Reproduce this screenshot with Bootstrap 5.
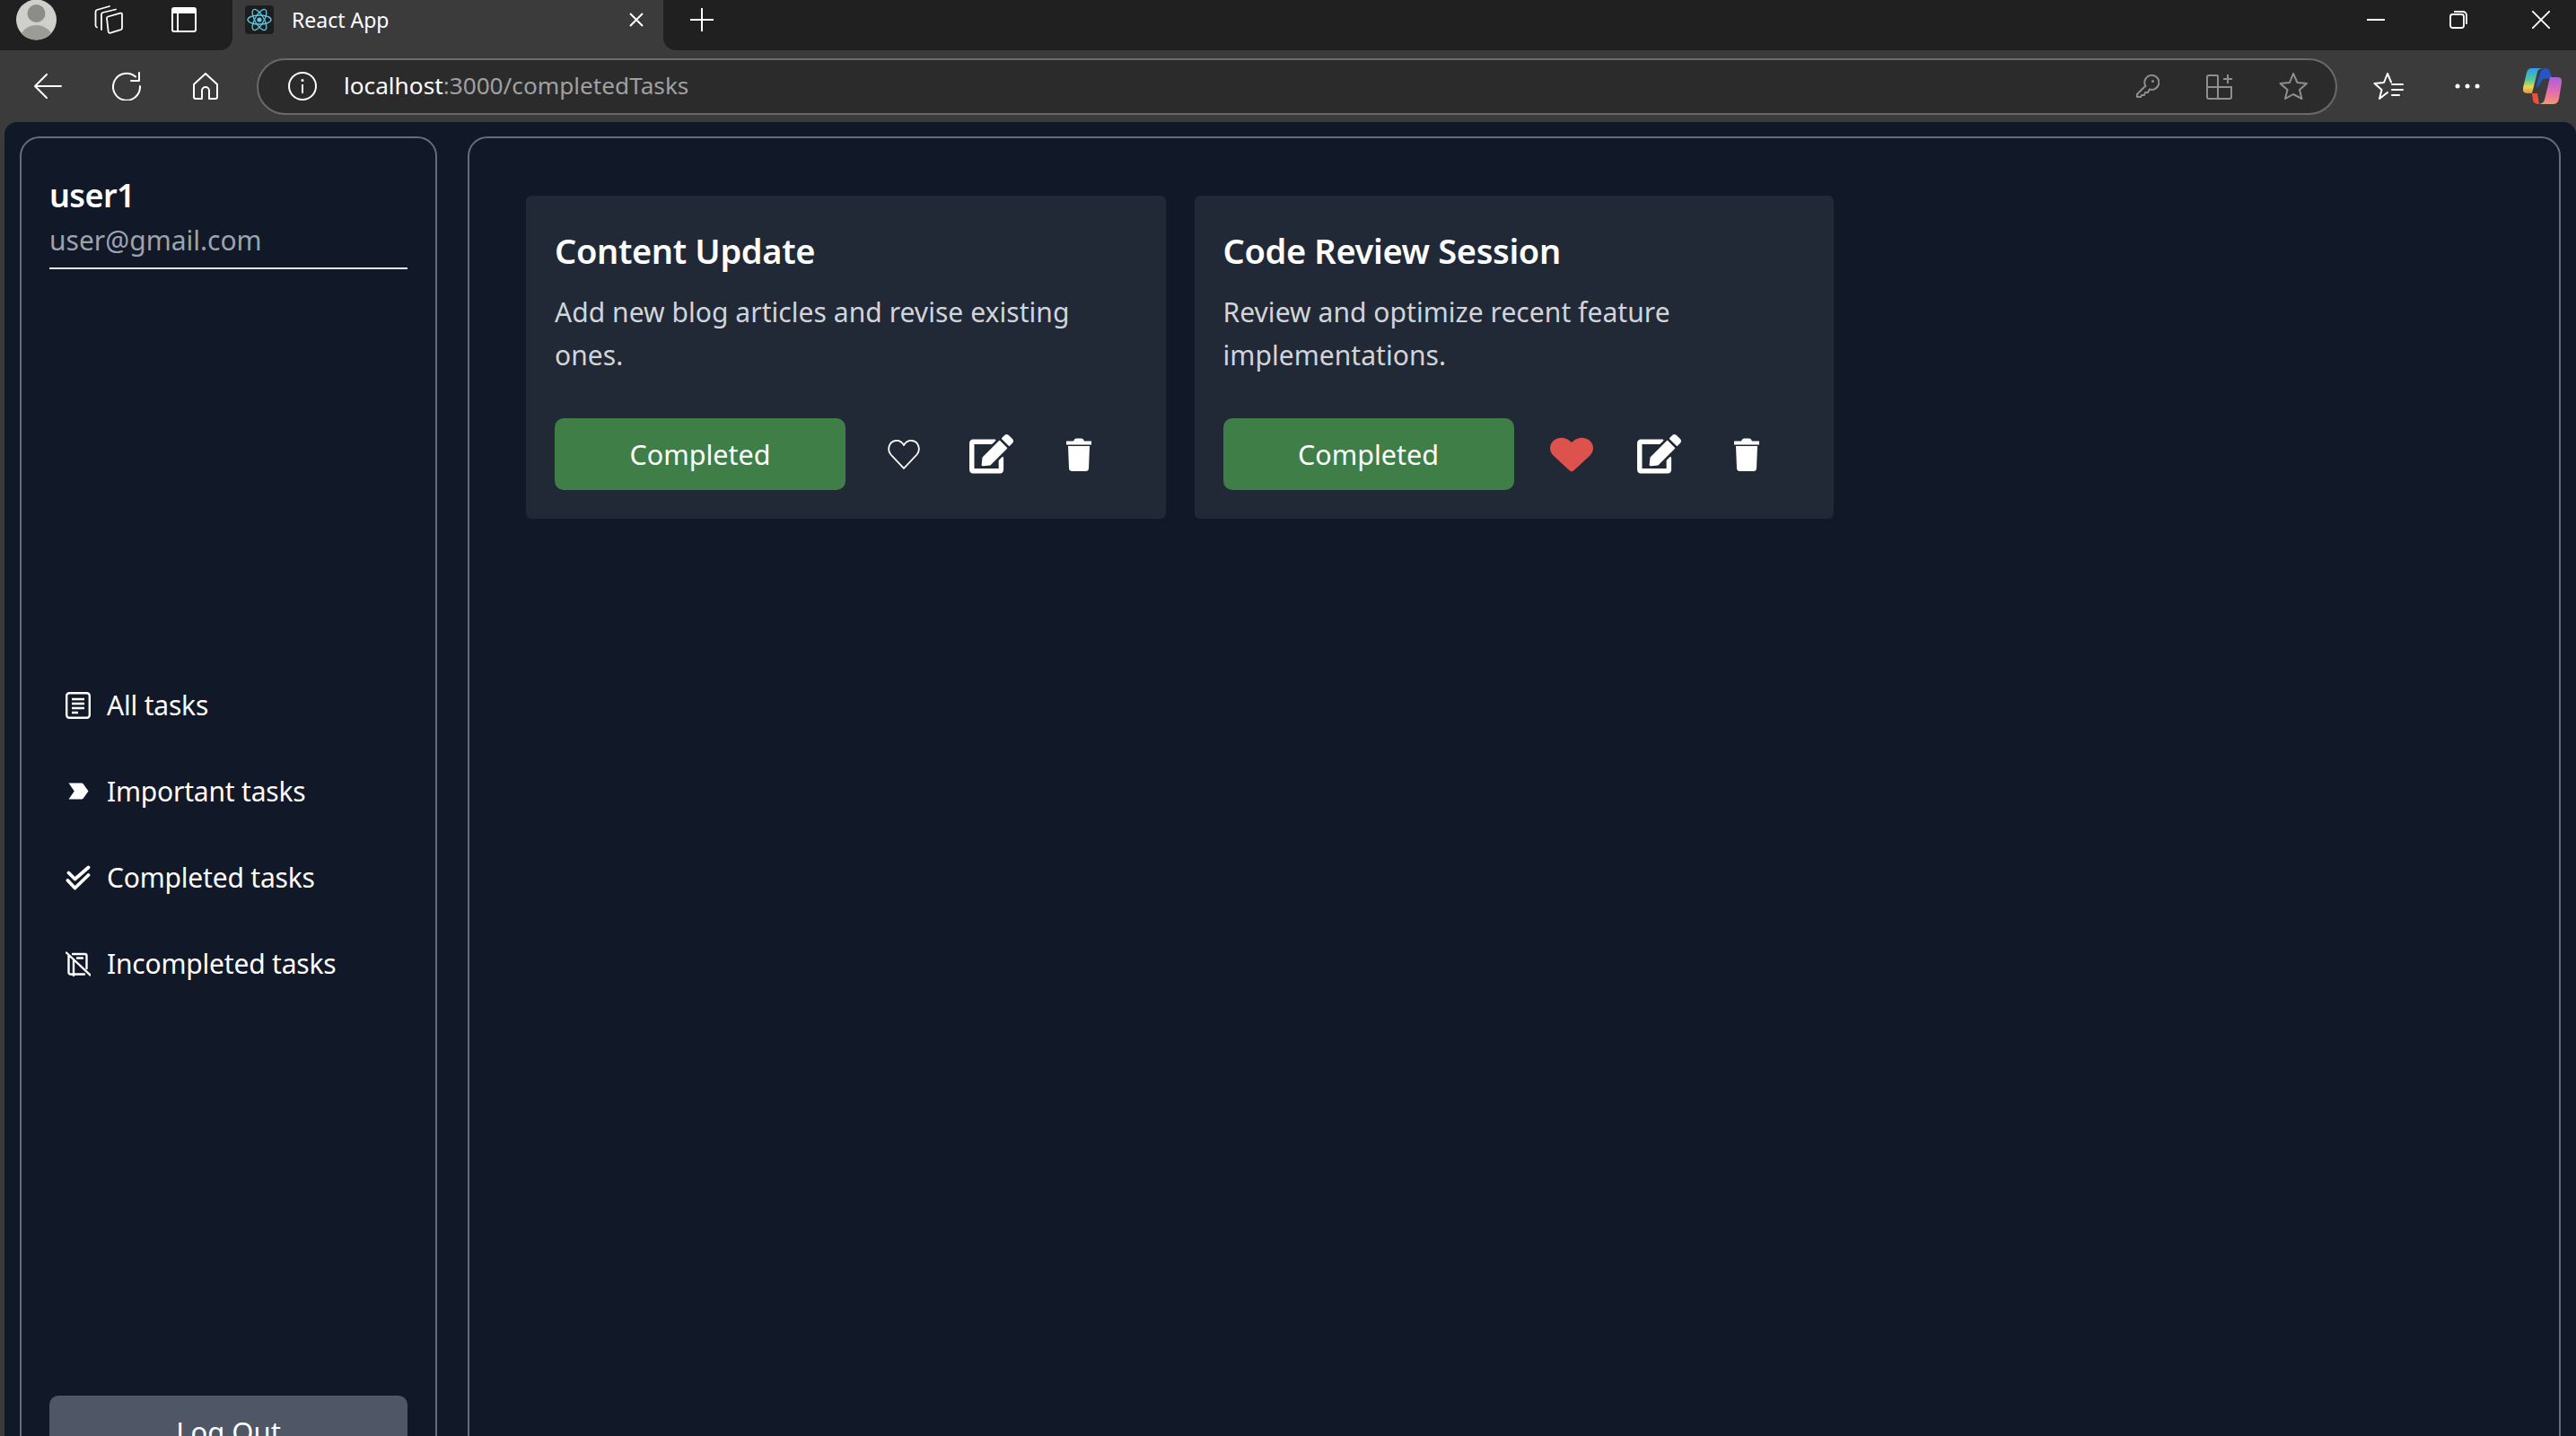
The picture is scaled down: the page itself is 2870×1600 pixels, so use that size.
<!DOCTYPE html>
<html lang="en">

<head>
    <meta charset="UTF-8">
    <title>React App</title>
    <link href="https://cdn.jsdelivr.net/npm/bootstrap@5.3.0/dist/css/bootstrap.min.css" rel="stylesheet">
    <style>
        html, body { height: 1600px; overflow: hidden; }
        body { background: #3b3b3b; font-family: "Noto Sans", "Open Sans", sans-serif; color: #fff; }
        svg { display: block; flex: none; }

        /* browser chrome */
        .strip { height: 56px; background: #3b3b3b; }
        .strip-left { width: 259px; background: #202020; border-bottom-right-radius: 14px; padding-left: 18px; }
        .strip-tab { width: 480px; padding-left: 14px; padding-right: 22px; padding-bottom: 12px; }
        .strip-right { background: #202020; border-bottom-left-radius: 14px; padding-left: 29px; padding-right: 29px; padding-bottom: 12px; }
        .tab-label { font-size: 23px; margin-left: 20px; }
        .fav-tile { width: 32px; height: 32px; background: #1d1d1d; border-radius: 4px; }
        .win-btns { gap: 72px; }
        .toolbar { height: 80px; background: #3b3b3b; padding-left: 37px; padding-right: 15px; }
        .addr { width: 2320px; height: 63px; margin-left: 43px; margin-right: 40px; background: #2b2b2b; border: 2px solid #696969; border-radius: 32px; padding-left: 33px; padding-right: 31px; }
        .addr-text { font-size: 26.2px; margin-left: 30px; color: #a0a0a0; }
        .addr-text b { font-weight: 400; color: #fff; }

        /* page */
        .page-wrap { height: 1464px; margin-left: 5px; background: #111827; border-top-left-radius: 14px; border-top-right-radius: 14px; padding: 16px 17px 0 17px; gap: 34px; overflow: hidden; }
        .panel { border: 2px solid #666d7a; border-radius: 22px; height: 1517px; }
        .side-panel { width: 465px; flex: none; padding: 37px 31px 32px 31px; }
        .main-panel { flex: 1; min-width: 0; padding: 64px 63px; }
        .user-name { font-size: 36px; font-weight: 600; line-height: 53px; margin: 0; letter-spacing: -.6px; }
        .user-mail { font-size: 30px; line-height: 48px; color: #9ca3af; padding-bottom: 6px; border-bottom: 2px solid #e5e7eb; }
        .side-link { height: 96px; padding: 4px 0 0 16px; color: #fff; font-size: 30px; letter-spacing: -.2px; gap: 16px; }
        .side-link:hover, .side-link:focus { color: #fff; }
        .slot { width: 32px; justify-content: center; }
        .logout { height: 80px; background: #4f5665; color: #fff; font-size: 31px; border: 0; border-radius: 10px; }
        .logout:hover { background: #4f5665; color: #fff; }

        .task-grid { grid-template-columns: repeat(3, 712.5px); gap: 32px; }
        .task-card { --bs-card-bg: #222936; --bs-card-border-width: 0; --bs-card-border-radius: 6px; height: 360px; }
        .task-card .card-body { padding: 32px; }
        .task-title { font-size: 38px; font-weight: 600; line-height: 56px; margin: 1px 0 17px; color: #fff; letter-spacing: -.35px; }
        .task-text { font-size: 30px; line-height: 48px; color: #d1d5db; margin: 0 0 46px; height: 96px; letter-spacing: .05px; }
        .done-btn { width: 324px; height: 80px; padding-top: 8px; background: #3f7f47; color: #fff; font-size: 30.5px; border: 0; border-radius: 10px; }
        .done-btn:hover { background: #3f7f47; color: #fff; }
        .act-row { margin-left: 16px; }
        .act-slot { width: 97.5px; justify-content: center; }
    </style>
</head>

<body>
    <!-- tab strip -->
    <div class="strip d-flex">
        <div class="strip-left d-flex align-items-start">
            <svg width="45" height="45" viewBox="0 0 45 45"><clipPath id="av"><circle cx="22.500" cy="22" r="22.500"/></clipPath><g clip-path="url(#av)"><rect width="45" height="45" fill="#cfcfcb"/><circle cx="22.500" cy="15" r="10" fill="#8c8c88"/><ellipse cx="22.500" cy="43" rx="18" ry="15" fill="#9b9b97"/></g></svg>
            <svg class="ms-auto" style="margin-top:6px" width="32" height="32" viewBox="0 0 32 32" fill="none" stroke="#fff" stroke-width="1.800" stroke-linejoin="round" stroke-linecap="round"><path d="M15.500 12.500 29 8.700q2-.5 2 1.500v15q0 1.500-1.500 2L18 30.700q-2 .5-2.300-1.500L14 14.500q-.2-1.500 1.500-2z"/><path d="M8 27V10q0-1.500 1.500-2L24 4.500"/><path d="M3 24.500Q1.500 24 1.500 22V7q0-1.500 1.500-2L17 1"/></svg>
            <svg style="margin:8px 40px 0 54px" width="28" height="28" viewBox="0 0 28 28"><path d="M3 0h22a3 3 0 0 1 3 3v22a3 3 0 0 1-3 3H3a3 3 0 0 1-3-3V3a3 3 0 0 1 3-3zM2 7v18a1 1 0 0 0 1 1h3V7zm6 0v19h17a1 1 0 0 0 1-1V7z" fill="#fff" fill-rule="evenodd"/></svg>
        </div>
        <div class="strip-tab d-flex align-items-center">
            <div class="fav-tile d-flex align-items-center justify-content-center">
                <svg width="28" height="28" viewBox="-14 -14 28 28" fill="none" stroke="#61c8e6" stroke-width="1.300"><circle r="2.600" fill="#61c8e6" stroke="none"/><ellipse rx="13" ry="5"/><ellipse rx="13" ry="5" transform="rotate(60)"/><ellipse rx="13" ry="5" transform="rotate(120)"/></svg>
            </div>
            <span class="tab-label">React App</span>
            <svg class="ms-auto" width="16" height="16" viewBox="0 0 16 16" stroke="#fff" stroke-width="2"><path d="M1 1l14 14M15 1 1 15"/></svg>
        </div>
        <div class="strip-right flex-grow-1 d-flex align-items-center justify-content-between">
            <svg width="28" height="28" viewBox="0 0 28 28" stroke="#fff" stroke-width="2"><path d="M14 1v26M1 14h26"/></svg>
            <div class="d-flex align-items-center win-btns">
                <svg width="20" height="20" viewBox="0 0 20 20" stroke="#fff" stroke-width="2"><path d="M0 10h20"/></svg>
                <svg width="20" height="20" viewBox="0 0 20 20" fill="none" stroke="#fff" stroke-width="1.800"><rect x="1" y="4" width="15" height="15" rx="2.500"/><path d="M5 1h10a4 4 0 0 1 4 4v10"/></svg>
                <svg width="20" height="20" viewBox="0 0 20 20" stroke="#fff" stroke-width="1.800"><path d="M0 0l20 20M20 0 0 20"/></svg>
            </div>
        </div>
    </div>

    <!-- toolbar -->
    <div class="toolbar d-flex align-items-center">
        <svg width="32" height="28" viewBox="0 0 32 28" fill="none" stroke="#fff" stroke-width="2" stroke-linecap="round" stroke-linejoin="round"><path d="M31 14H2M15 1 2 14l13 13"/></svg>
        <svg style="margin-left:56px" width="32" height="32" viewBox="0 0 32 32" fill="none" stroke="#fff" stroke-width="2" stroke-linecap="round" stroke-linejoin="round"><path d="M26 5.500A15 15 0 1 0 31 16M30 1v9h-9"/></svg>
        <svg style="margin-left:58px" width="28" height="30" viewBox="0 0 28 30" fill="none" stroke="#fff" stroke-width="2" stroke-linejoin="round"><path d="M14 1 1 13v14a2 2 0 0 0 2 2h7v-9a4 4 0 0 1 8 0v9h7a2 2 0 0 0 2-2V13z"/></svg>
        <div class="addr d-flex align-items-center">
            <svg width="32" height="32" viewBox="0 0 32 32" fill="none" stroke="#fff" stroke-width="2"><circle cx="16" cy="16" r="15"/><path d="M16 14v10"/><circle cx="16" cy="9.500" r="1.500" fill="#fff" stroke="none"/></svg>
            <span class="addr-text"><b>localhost</b>:3000/completedTasks</span>
            <svg class="ms-auto" width="26" height="26" viewBox="0 0 26 26" fill="none" stroke="#8f8f8f" stroke-width="2" stroke-linejoin="round"><path d="M9.500 13.500 1 22v3h4l1-2h3l1-3h3l2-3.500a8 8 0 1 0-4.500-3.500z"/><circle cx="18.500" cy="7.500" r="1.500" fill="#8f8f8f" stroke="none"/></svg>
            <svg style="margin-left:52px" width="30" height="30" viewBox="0 0 30 30" fill="none" stroke="#8f8f8f" stroke-width="2"><path d="M3 3h9a1 1 0 0 1 1 1v25H3a2 2 0 0 1-2-2V5a2 2 0 0 1 2-2zM1 16h27M13 29h13a2 2 0 0 0 2-2V16H13M19 7h10M24 2v10"/></svg>
            <svg style="margin-left:51px" width="32" height="30" viewBox="0 0 32 30" fill="none" stroke="#8f8f8f" stroke-width="2" stroke-linejoin="round"><path d="m16 1 4.500 10 10.500 1-8 7 2.500 10L16 24l-9 5 2.500-10-8-7 10.500-1z"/></svg>
        </div>
        <svg width="34" height="30" viewBox="0 0 34 30" fill="none" stroke="#fff" stroke-width="2" stroke-linecap="round" stroke-linejoin="round"><path d="M16 22 7 29l2.500-10-8-7L12 11l4-10 4 9.500M21 13h12M21 19h12M21 25h8"/></svg>
        <svg style="margin-left:57px" width="28" height="6" viewBox="0 0 28 6" fill="#fff"><circle cx="3" cy="3" r="2.500"/><circle cx="14" cy="3" r="2.500"/><circle cx="25" cy="3" r="2.500"/></svg>
        <svg style="margin-left:48px" width="44" height="40" viewBox="0 0 44 40">
            <defs>
                <linearGradient id="cpA" x1="0" y1="0" x2="0" y2="1"><stop offset="0" stop-color="#2f9cf0"/><stop offset=".45" stop-color="#4fc99a"/><stop offset=".75" stop-color="#e8d84f"/><stop offset="1" stop-color="#f08a3c"/></linearGradient>
                <linearGradient id="cpB" x1="0" y1="0" x2="0" y2="1"><stop offset="0" stop-color="#a85fe0"/><stop offset=".6" stop-color="#e870a8"/><stop offset="1" stop-color="#f59a6a"/></linearGradient>
            </defs>
            <path d="M24 0h-14Q5 0 4 5L0 22q-1 6 5 6h5l6-24q1-4 8-4z" fill="url(#cpA)"/>
            <path d="M24 0q5 0 6 4l2 7-10 1-6 10-1-3 5-16z" fill="#2456c8"/>
            <path d="M30 10h9q5 0 4 6l-3 18q-1 6-7 6H18q5-1 6-5l6-25z" fill="url(#cpB)"/>
            <path d="M10 28h6l2 12q-6 0-7-4z" fill="#e8503c"/>
        </svg>
    </div>

    <!-- app -->
    <div class="page-wrap d-flex">
        <aside class="panel side-panel d-flex flex-column justify-content-between">
            <div>
                <h5 class="user-name">user1</h5>
                <div class="user-mail">user@gmail.com</div>
            </div>
            <nav class="nav flex-column">
                <a class="nav-link side-link d-flex align-items-center" href="#">
                    <span class="slot d-flex"><svg width="28" height="30" viewBox="0 0 28 30" fill="none" stroke="#fff" stroke-width="2.400"><rect x="1.200" y="1.200" width="25.600" height="27.600" rx="3"/><path d="M7 8h14M7 13h14M7 18h14M7 23h7"/></svg></span>
                    All tasks
                </a>
                <a class="nav-link side-link d-flex align-items-center" href="#">
                    <span class="slot d-flex"><svg width="31" height="31" viewBox="0 0 24 24" fill="#fff"><path d="M3.500 18.990l11 .01c.67 0 1.270-.33 1.630-.84L20.500 12l-4.370-6.160c-.36-.51-.96-.84-1.630-.84l-11 .01L8.340 12 3.500 18.990z"/></svg></span>
                    Important tasks
                </a>
                <a class="nav-link side-link d-flex align-items-center" href="#">
                    <span class="slot d-flex"><svg width="28" height="28" viewBox="0 0 28 28" fill="none" stroke="#fff" stroke-width="3.800" stroke-linecap="round" stroke-linejoin="round"><path d="M3.500 8.500l7 7L25.500 2.500M2.500 17l8 8.500L25.500 11"/></svg></span>
                    Completed tasks
                </a>
                <a class="nav-link side-link d-flex align-items-center" href="#">
                    <span class="slot d-flex"><svg width="28" height="28" viewBox="0 0 28 28" fill="none" stroke="#fff" stroke-width="2.400" stroke-linecap="round"><path d="M8 3h13.500a2 2 0 0 1 2 2v14M21 25.500H5.500a2 2 0 0 1-2-2V5M1 1.500l26.500 25M9 9v18M13 7.500h6"/></svg></span>
                    Incompleted tasks
                </a>
            </nav>
            <button class="btn logout w-100" type="button">Log Out</button>
        </aside>

        <main class="panel main-panel">
            <div class="task-grid d-grid">
                <div class="card task-card">
                    <div class="card-body">
                        <h5 class="task-title">Content Update</h5>
                        <p class="task-text">Add new blog articles and revise existing ones.</p>
                        <div class="d-flex align-items-center">
                            <button class="btn done-btn" type="button">Completed</button>
                            <div class="act-row d-flex align-items-center">
                                <span class="act-slot d-flex"><svg width="36" height="33" viewBox="0 0 36 33" fill="none" stroke="#fff" stroke-width="1.800" stroke-linejoin="round"><path d="M18 31.800 3.500 16.500C-.5 12 .5 2 9 1c4-.4 7 1.800 9 5 2-3.200 5-5.400 9-5 8.500 1 9.500 11 5.500 15.500z"/></svg></span>
                                <span class="act-slot d-flex"><svg width="49" height="43.500" viewBox="0 0 576 512" fill="#fff"><path d="M402.600 83.200l90.200 90.200c3.800 3.800 3.800 10 0 13.800L274.400 405.600l-92.800 10.300c-12.400 1.400-22.900-9.100-21.500-21.500l10.300-92.800L388.800 83.200c3.800-3.800 10-3.800 13.800 0zm162-22.900l-48.800-48.800c-15.200-15.200-39.900-15.200-55.200 0l-35.400 35.400c-3.800 3.800-3.800 10 0 13.800l90.200 90.200c3.800 3.800 10 3.800 13.800 0l35.400-35.400c15.200-15.300 15.200-40 0-55.200zM384 346.200V448H64V128h229.800c3.200 0 6.200-1.300 8.500-3.500l40-40c7.600-7.600 2.200-20.500-8.500-20.500H48C21.500 64 0 85.500 0 112v352c0 26.500 21.500 48 48 48h352c26.500 0 48-21.500 48-48V306.200c0-10.700-12.900-16-20.500-8.500l-40 40c-2.200 2.300-3.500 5.300-3.500 8.500z"/></svg></span>
                                <span class="act-slot d-flex"><svg width="28" height="37" viewBox="0 0 28 37" fill="#fff"><path d="M8 3.500Q9 .5 11 .5h6q2 0 3 3zM0 3.500h28v4H0zM2 9h24l-1 25q-.2 3-3.500 3h-15q-3.300 0-3.500-3z"/></svg></span>
                            </div>
                        </div>
                    </div>
                </div>
                <div class="card task-card">
                    <div class="card-body">
                        <h5 class="task-title">Code Review Session</h5>
                        <p class="task-text">Review and optimize recent feature implementations.</p>
                        <div class="d-flex align-items-center">
                            <button class="btn done-btn" type="button">Completed</button>
                            <div class="act-row d-flex align-items-center">
                                <span class="act-slot d-flex"><svg width="48" height="43" viewBox="0 0 512 512" preserveAspectRatio="none" fill="#dd524c"><path d="M462.300 62.600C407.500 15.900 326 24.300 275.700 76.200L256 96.500l-19.700-20.300C186.100 24.300 104.500 15.900 49.700 62.600c-62.800 53.600-66.100 149.800-9.900 207.900l193.500 199.800c12.500 12.900 32.800 12.900 45.300 0l193.500-199.800c56.300-58.100 53-154.300-9.800-207.900z"/></svg></span>
                                <span class="act-slot d-flex"><svg width="49" height="43.500" viewBox="0 0 576 512" fill="#fff"><path d="M402.600 83.200l90.200 90.200c3.800 3.800 3.800 10 0 13.800L274.400 405.600l-92.800 10.300c-12.400 1.400-22.900-9.100-21.500-21.500l10.300-92.800L388.800 83.200c3.800-3.800 10-3.800 13.800 0zm162-22.900l-48.800-48.800c-15.200-15.200-39.900-15.200-55.200 0l-35.400 35.400c-3.800 3.800-3.800 10 0 13.800l90.200 90.200c3.800 3.800 10 3.800 13.800 0l35.400-35.400c15.200-15.300 15.200-40 0-55.200zM384 346.200V448H64V128h229.800c3.200 0 6.200-1.300 8.500-3.500l40-40c7.600-7.600 2.200-20.500-8.500-20.500H48C21.500 64 0 85.500 0 112v352c0 26.500 21.500 48 48 48h352c26.500 0 48-21.500 48-48V306.200c0-10.700-12.900-16-20.500-8.500l-40 40c-2.200 2.300-3.500 5.300-3.500 8.500z"/></svg></span>
                                <span class="act-slot d-flex"><svg width="28" height="37" viewBox="0 0 28 37" fill="#fff"><path d="M8 3.500Q9 .5 11 .5h6q2 0 3 3zM0 3.500h28v4H0zM2 9h24l-1 25q-.2 3-3.500 3h-15q-3.300 0-3.500-3z"/></svg></span>
                            </div>
                        </div>
                    </div>
                </div>
            </div>
        </main>
    </div>

    <script src="https://cdn.jsdelivr.net/npm/bootstrap@5.3.0/dist/js/bootstrap.bundle.min.js"></script>
</body>

</html>
